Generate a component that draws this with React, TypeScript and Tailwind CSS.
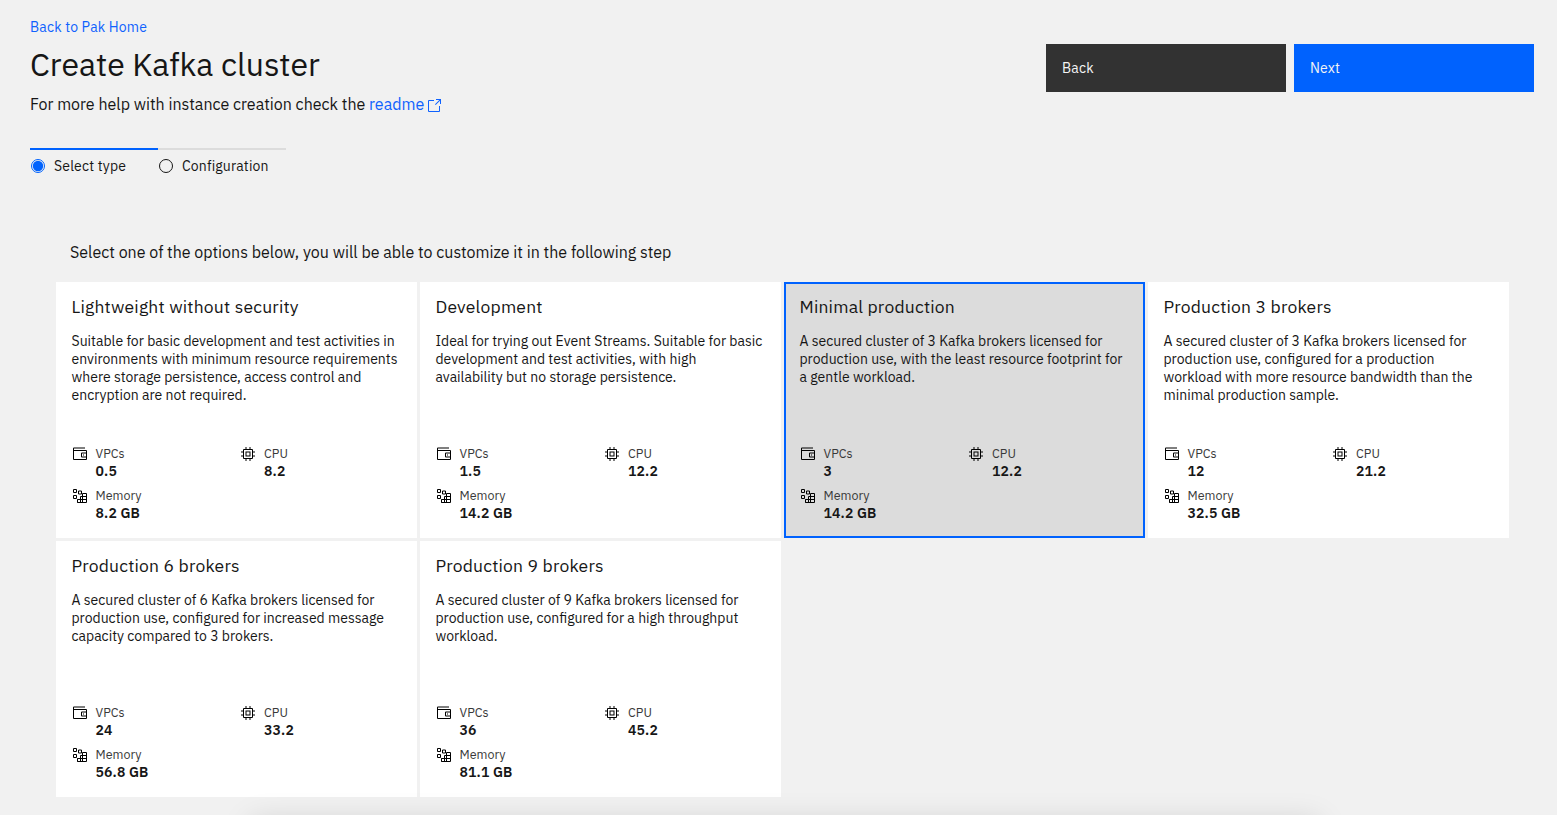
import type { ReactNode } from 'react';

const cards = [
  { t: 'Lightweight without security', d: ['Suitable for basic development and test activities in', 'environments with minimum resource requirements', 'where storage persistence, access control and', 'encryption are not required.'], v: '0.5', c: '8.2', m: '8.2 GB' },
  { t: 'Development', d: ['Ideal for trying out Event Streams. Suitable for basic', 'development and test activities, with high', 'availability but no storage persistence.'], v: '1.5', c: '12.2', m: '14.2 GB' },
  { t: 'Minimal production', d: ['A secured cluster of 3 Kafka brokers licensed for', 'production use, with the least resource footprint for', 'a gentle workload.'], v: '3', c: '12.2', m: '14.2 GB', selected: true },
  { t: 'Production 3 brokers', d: ['A secured cluster of 3 Kafka brokers licensed for', 'production use, configured for a production', 'workload with more resource bandwidth than the', 'minimal production sample.'], v: '12', c: '21.2', m: '32.5 GB' },
  { t: 'Production 6 brokers', d: ['A secured cluster of 6 Kafka brokers licensed for', 'production use, configured for increased message', 'capacity compared to 3 brokers.'], v: '24', c: '33.2', m: '56.8 GB' },
  { t: 'Production 9 brokers', d: ['A secured cluster of 9 Kafka brokers licensed for', 'production use, configured for a high throughput', 'workload.'], v: '36', c: '45.2', m: '81.1 GB' },
];

function Wallet() {
  return (
    <svg viewBox="0 0 32 32" className="size-4 shrink-0 fill-black">
      <path d="M22 17h2v2h-2z" />
      <path d="M28 8H4V5h22V3H4a2 2 0 0 0-2 2v21a2 2 0 0 0 2 2h24a2 2 0 0 0 2-2V10a2 2 0 0 0-2-2ZM4 26V10h24v3h-8a2 2 0 0 0-2 2v6a2 2 0 0 0 2 2h8v3Zm24-11v6h-8v-6Z" />
    </svg>
  );
}

function Chip() {
  return (
    <svg viewBox="0 0 32 32" className="size-4 shrink-0 fill-black">
      <path d="M11 11v10h10V11Zm8 8h-6v-6h6Z" />
      <path d="M30 13v-2h-4V8a2 2 0 0 0-2-2h-3V2h-2v4h-6V2h-2v4H8a2 2 0 0 0-2 2v3H2v2h4v6H2v2h4v3a2 2 0 0 0 2 2h3v4h2v-4h6v4h2v-4h3a2 2 0 0 0 2-2v-3h4v-2h-4v-6ZM24 24H8V8h16Z" />
    </svg>
  );
}

function Blocks() {
  return (
    <svg viewBox="0 0 16 16" className="size-4 shrink-0 fill-none stroke-black">
      <path d="M1.5 1.5h3v3h-3zM1.5 7.5h3v3h-3zM6.5 3h3v3h-3z" />
      <path d="M14.5 5.5v9h-9v-3h9M10.5 14.5v-9h4M8.5 14.5v-6h6M5.5 11.5v3" />
    </svg>
  );
}

function Launch() {
  return (
    <svg viewBox="0 0 32 32" className="ml-0.5 mt-[3px] size-4 fill-[#0f62fe]">
      <path d="M26 28H6a2 2 0 0 1-2-2V6a2 2 0 0 1 2-2h10v2H6v20h20V16h2v10a2 2 0 0 1-2 2Z" />
      <path d="M20 2v2h6.6L18 12.6l1.4 1.4L28 5.4V12h2V2Z" />
    </svg>
  );
}

function Stat({ icon, label, value, gap }: { icon: ReactNode; label: string; value: string; gap: string }) {
  return (
    <div className={`flex h-[42px] ${gap}`}>
      {icon}
      <div>
        <div className="-mt-px h-[17px] text-[12.5px] leading-4 tracking-[0.03px] text-[#393939]">{label}</div>
        <div className="text-[14px] font-semibold leading-[18px] tracking-[0.16px]">{value}</div>
      </div>
    </div>
  );
}

export default function App() {
  return (
    <div className="relative h-[815px] w-[1557px] overflow-hidden bg-[#f1f1f1] font-['IBM_Plex_Sans',Roboto,sans-serif] text-[#161616]">
      <header className="flex justify-between pl-[30px] pr-[23px] pt-[18px]">
        <div>
          <a className="block text-[14px] leading-[18px] tracking-[0.16px] text-[#0f62fe]">Back to Pak Home</a>
          <h1 className="mt-2 text-[32px] font-normal leading-10">Create Kafka cluster</h1>
          <p className="mt-2 flex h-6 text-[16px] leading-6">
            <span>For more help with instance creation check the&nbsp;</span>
            <a className="flex items-center text-[#0f62fe]">readme<Launch /></a>
          </p>
        </div>
        <div className="mt-[26px] flex h-12 gap-2 text-[14px] tracking-[0.16px] text-[#f4f4f4]">
          <button className="w-60 bg-[#323232] px-4 text-left">Back</button>
          <button className="w-60 bg-[#0062fe] px-4 text-left">Next</button>
        </div>
      </header>
      <nav className="ml-[30px] mt-8 flex text-[14px] leading-[18px] tracking-[0.16px]">
        <div className="flex w-32 items-center gap-2 border-t-2 border-[#0062fe] pt-[7px]">
          <svg viewBox="0 0 16 16" className="size-4"><circle cx="8" cy="8" r="6.5" fill="none" stroke="#0062fe" /><circle cx="8" cy="8" r="5.2" fill="#0062fe" /></svg>
          Select type
        </div>
        <div className="flex w-32 items-center gap-2 border-t-2 border-[#dcdcdc] pt-[7px]">
          <svg viewBox="0 0 16 16" className="size-4"><circle cx="8" cy="8" r="6.5" fill="none" stroke="#161616" /></svg>
          Configuration
        </div>
      </nav>
      <p className="ml-[70px] mt-[65px] text-[16px] leading-6">Select one of the options below, you will be able to customize it in the following step</p>
      <main className="ml-14 mt-[18px] grid w-[1453px] grid-cols-[repeat(4,361px)] gap-[3px]">
        {cards.map((c) => (
          <section key={c.t} className={`flex h-64 flex-col border-2 px-[13.5px] pt-3 ${c.selected ? 'border-[#0062fe] bg-[#dcdcdc]' : 'border-white bg-white'}`}>
            <h2 className="text-[17.5px] font-normal leading-[22px] tracking-[0.2px]">{c.t}</h2>
            <div className="mt-3.5 h-[114px] whitespace-nowrap text-[14px] leading-[18px]">
              {c.d.map((l) => <div key={l}>{l}</div>)}
            </div>
            <div className="grid grid-cols-[168px_1fr] pl-[0.5px]">
              <Stat icon={<Wallet />} label="VPCs" value={c.v} gap="gap-[7.5px]" />
              <Stat icon={<Chip />} label="CPU" value={c.c} gap="gap-2" />
              <Stat icon={<Blocks />} label="Memory" value={c.m} gap="gap-[7.5px]" />
            </div>
          </section>
        ))}
      </main>
      <div className="pointer-events-none absolute left-[250px] top-[820px] h-20 w-[1070px] shadow-[0_0_30px_rgba(0,0,0,0.13)]" />
    </div>
  );
}
